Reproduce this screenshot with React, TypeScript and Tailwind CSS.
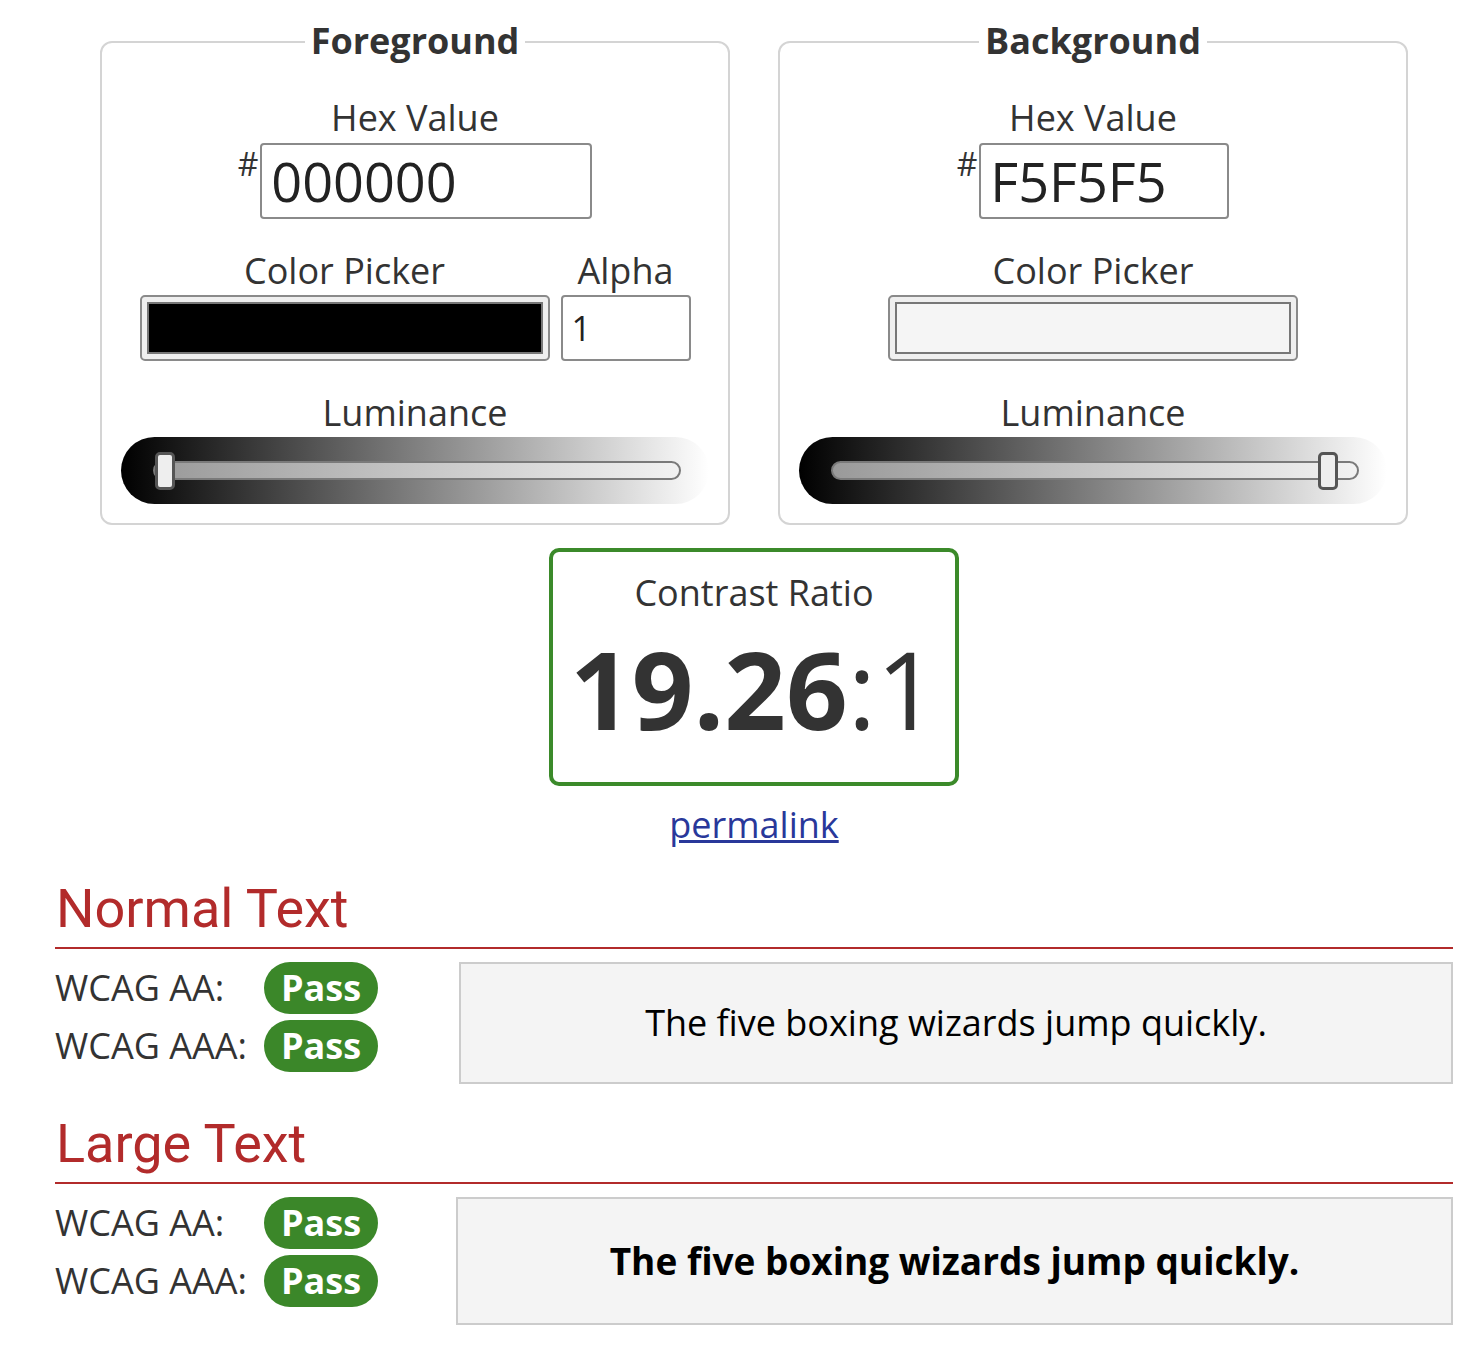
import React from "react";

const OS = { fontFamily: '"Open Sans", "Noto Sans", sans-serif' };
const RB = { fontFamily: 'Roboto, "Open Sans", sans-serif' };

function Slider({ pos }: { pos: "min" | "max" }) {
  return (
    <div className="relative mx-[19px] h-[67px] rounded-full bg-[linear-gradient(to_right,#000000,#ffffff)] flex items-center pl-[32px] pr-[28px]">
      <div className="relative h-[19px] w-full rounded-full border-2 border-[#7a7a7a] bg-[linear-gradient(to_right,#9a9a9a,#f2f2f2)]">
        <div
          className={
            pos === "min"
              ? "absolute left-[0px] top-[-11px] h-[38px] w-[20px] rounded-[5px] border-[3px] border-[#555555] bg-[#eeeeee]"
              : "absolute right-[19px] top-[-11px] h-[38px] w-[20px] rounded-[5px] border-[3px] border-[#555555] bg-[#eeeeee]"
          }
        />
      </div>
    </div>
  );
}

function Panel({
  title,
  hex,
  hexWidth,
  swatch,
  alpha,
  pos,
}: {
  title: string;
  hex: string;
  hexWidth: string;
  swatch: string;
  alpha: boolean;
  pos: "min" | "max";
}) {
  return (
    <div className="relative w-[630px] h-[484px] rounded-[12px] border-2 border-[#d4d4d4] text-[#333333]">
      <div className="absolute left-0 right-0 top-[-22px] flex justify-center">
        <span className="bg-white px-[6px] text-[36px] leading-[40px] font-bold">{title}</span>
      </div>
      <div className="flex flex-col pt-[55px]">
        <div className="h-[40px] text-center text-[36px] leading-[40px]">Hex Value</div>
        <div className="mt-[5px] flex justify-center items-start">
          <span className="mt-[3px] mr-[2px] text-[32px] leading-[36px]">#</span>
          <div
            className={
              hexWidth +
              " h-[76px] rounded-[4px] border-2 border-[#8a8a8a] pl-[9px] text-[54px] leading-[72px] text-[#222222]"
            }
          >
            {hex}
          </div>
        </div>
        <div className="mt-[32px] flex justify-center gap-[11px]">
          <div className="flex flex-col items-center">
            <div className="h-[40px] text-center text-[36px] leading-[40px]">Color Picker</div>
            <div className="mt-[4px] h-[66px] w-[410px] rounded-[5px] border-2 border-[#8a8a8a] bg-[#efefef] p-[5px]">
              <div className={"h-full w-full border-2 border-[#777777] " + swatch} />
            </div>
          </div>
          {alpha && (
            <div className="flex flex-col items-center">
              <div className="h-[40px] text-center text-[36px] leading-[40px]">Alpha</div>
              <div className="mt-[4px] h-[66px] w-[130px] rounded-[4px] border-2 border-[#8a8a8a] pl-[9px] text-[34px] leading-[62px] text-[#222222]">
                1
              </div>
            </div>
          )}
        </div>
        <div className="mt-[32px] h-[40px] text-center text-[36px] leading-[40px]">Luminance</div>
        <div className="mt-[4px]">
          <Slider pos={pos} />
        </div>
      </div>
    </div>
  );
}

function Row({ label }: { label: string }) {
  return (
    <div className="flex items-center h-[52px]">
      <span className="w-[209px] text-[36px] leading-[52px] text-[#333333]">{label}</span>
      <span className="h-[52px] w-[114px] rounded-full bg-[#3b8729] text-center text-[36px] font-bold leading-[52px] text-white">
        Pass
      </span>
    </div>
  );
}

function Section({
  title,
  bold,
  boxH,
  boxMl,
}: {
  title: string;
  bold: boolean;
  boxH: string;
  boxMl: string;
}) {
  return (
    <div>
      <h2 style={RB} className="text-[54px] leading-[64px] text-[#b22b2b] border-b-2 border-[#b22b2b] pb-[6px] pl-[1px]">
        {title}
      </h2>
      <div className="mt-[13px] flex items-start">
        <div className="flex flex-col gap-[6px]">
          <Row label="WCAG AA:" />
          <Row label="WCAG AAA:" />
        </div>
        <div
          className={
            boxMl +
            " " +
            boxH +
            " flex-1 flex items-center justify-center border-2 border-[#cccccc] bg-[#f4f4f4] text-black " +
            (bold ? "text-[37px] font-bold" : "text-[36px]")
          }
        >
          The five boxing wizards jump quickly.
        </div>
      </div>
    </div>
  );
}

export default function App() {
  return (
    <div style={OS} className="min-h-[1350px] bg-white">
      <div className="ml-[55px] w-[1398px] pt-[41px]">
        <div className="flex justify-center gap-[48px]">
          <Panel title="Foreground" hex="000000" hexWidth="w-[332px]" swatch="bg-black" alpha={true} pos="min" />
          <Panel title="Background" hex="F5F5F5" hexWidth="w-[250px]" swatch="bg-[#f5f5f5]" alpha={false} pos="max" />
        </div>
        <div className="mt-[23px] flex flex-col items-center">
          <div className="h-[238px] w-[410px] rounded-[10px] border-[4px] border-[#3b8a2a] flex flex-col items-center text-[#333333]">
            <div className="mt-[21px] text-[36px] leading-[40px]">Contrast Ratio</div>
            <div className="mt-[16px] text-[108px] leading-[120px]">
              <span className="font-bold">19.26</span>
              <span>:1</span>
            </div>
          </div>
          <a href="#" className="mt-[17px] text-[36px] leading-[44px] text-[#29389a] underline">
            permalink
          </a>
        </div>
        <div className="mt-[30px]">
          <Section title="Normal Text" bold={false} boxH="h-[122px]" boxMl="ml-[81px]" />
        </div>
        <div className="mt-[28px]">
          <Section title="Large Text" bold={true} boxH="h-[128px]" boxMl="ml-[78px]" />
        </div>
      </div>
    </div>
  );
}
